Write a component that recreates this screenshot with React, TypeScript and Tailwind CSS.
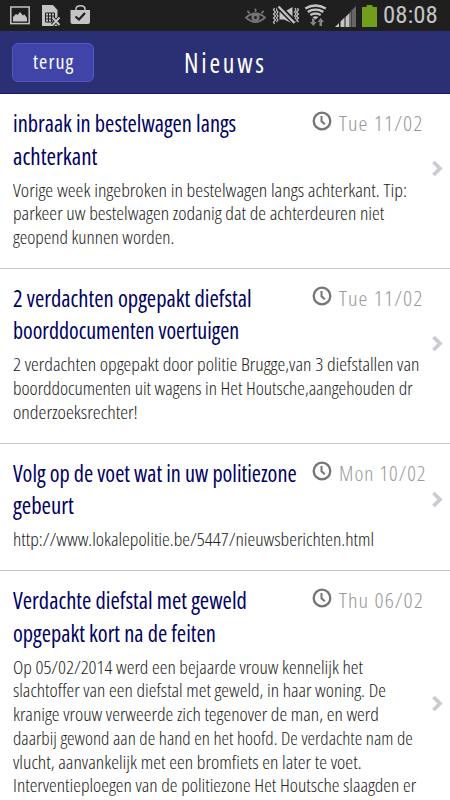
import { useLayoutEffect, useRef, useState } from "react";

type FitTextProps = {
  text: string;
  width: number;
  className?: string;
};

type NewsItem = {
  date: string;
  dateWidth: number;
  title: [string, number][];
  body: [string, number][];
  itemClass: string;
  chevronClass: string;
};

const NEWS: NewsItem[] = [
  {
    date: "Tue 11/02",
    dateWidth: 84,
    title: [
      ["inbraak in bestelwagen langs", 223],
      ["achterkant", 84],
    ],
    body: [
      ["Vorige week ingebroken in bestelwagen langs achterkant. Tip:", 394],
      ["parkeer uw bestelwagen zodanig dat de achterdeuren niet", 371],
      ["geopend kunnen worden.", 161],
    ],
    itemClass: "h-[174.5px]",
    chevronClass: "mt-[66px]",
  },
  {
    date: "Tue 11/02",
    dateWidth: 84,
    title: [
      ["2 verdachten opgepakt diefstal", 239],
      ["boorddocumenten voertuigen", 226],
    ],
    body: [
      ["2 verdachten opgepakt door politie Brugge,van 3 diefstallen van", 406],
      ["boorddocumenten uit wagens in Het Houtsche,aangehouden dr", 400],
      ["onderzoeksrechter!", 125],
    ],
    itemClass: "h-[175px]",
    chevronClass: "mt-[66.5px]",
  },
  {
    date: "Mon 10/02",
    dateWidth: 87,
    title: [
      ["Volg op de voet wat in uw politiezone", 284],
      ["gebeurt", 61],
    ],
    body: [["http://www.lokalepolitie.be/5447/nieuwsberichten.html", 361]],
    itemClass: "h-[127.5px]",
    chevronClass: "mt-[47.5px]",
  },
  {
    date: "Thu 06/02",
    dateWidth: 85,
    title: [
      ["Verdachte diefstal met geweld", 234],
      ["opgepakt kort na de feiten", 203],
    ],
    body: [
      ["Op 05/02/2014 werd een bejaarde vrouw kennelijk het", 350],
      ["slachtoffer van een diefstal met geweld, in haar woning. De", 373],
      ["kranige vrouw verweerde zich tegenover de man, en werd", 366],
      ["daarbij gewond aan de hand en het hoofd. De verdachte nam de", 400],
      ["vlucht, aanvankelijk met een bromfiets en later te voet.", 349],
      ["Interventieploegen van de politiezone Het Houtsche slaagden er", 403],
    ],
    itemClass: "h-[260px]",
    chevronClass: "mt-[124px]",
  },
];

// Condenses a single line of text so that it takes up exactly the given width.
function FitText({ text, width, className = "" }: FitTextProps) {
  const ref = useRef<HTMLSpanElement>(null);
  const [scale, setScale] = useState(1);

  useLayoutEffect(() => {
    if (ref.current) {
      setScale(width / ref.current.offsetWidth);
    }
  }, [text, width]);

  return (
    <span className="block" style={{ width }}>
      <span
        ref={ref}
        className={`inline-block origin-left align-top whitespace-nowrap ${className}`}
        style={{ transform: `scaleX(${scale})` }}
      >
        {text}
      </span>
    </span>
  );
}

function StatusBar() {
  return (
    <div className="flex h-[31px] items-center justify-between bg-[#1f1f1f] pr-3 pl-[10px] text-[#c4c4c4]">
      <svg width="82" height="31" viewBox="0 0 82 31">
        <rect x="0.8" y="7" width="18.4" height="16.6" fill="none" stroke="#c4c4c4" strokeWidth="1.5" />
        <path d="M3 21.5v-4.500l3-3 1.500 1 2.500-3 3 3.500 1.500-1 2.500 3.500v3.500z" fill="#c4c4c4" />
        <path d="M32 5h11l4.500 5v16H32z" fill="#c4c4c4" />
        <path d="M35.500 13h9v9h-9zM38.500 13v9M41.500 13v9M35.500 16h9M35.500 19h9" fill="none" stroke="#1f1f1f" strokeWidth="1" />
        <path d="M42.500 17.500l7 7.500M49.500 17.500l-7 7.500" stroke="#1f1f1f" strokeWidth="4" />
        <path d="M42.500 17.500l7 7.500M49.500 17.500l-7 7.500" stroke="#c4c4c4" strokeWidth="2" />
        <path d="M66 10.500V9c0-4.500 9-4.500 9 0v1.500" fill="none" stroke="#c4c4c4" strokeWidth="1.500" />
        <path d="M60.500 10h19.500v12q0 2-2 2H62.500q-2 0-2-2z" fill="#c4c4c4" />
        <path d="M65.500 16.500l3.500 3 6-6.500" fill="none" stroke="#1f1f1f" strokeWidth="2.200" />
      </svg>
      <div className="flex items-center gap-[6px]">
        <svg width="132" height="31" viewBox="245 0 132 31">
          <g fill="none" stroke="#747474" strokeWidth="1.800">
            <path d="M246 17.500q9.500-8 19 0q-9.500 9-19 0z" />
            <circle cx="255.500" cy="17.500" r="2.800" strokeWidth="2.600" />
            <path d="M255.500 12V8.500M249.500 13.500l-2-2.800M261.500 13.500l2-2.800" />
          </g>
          <path
            d="M274.500 8l-1 2 2 2-2 2 2 2-2 2 2 2-2 2 1 2M277 8l-.5 2 1.500 2-1.500 2 1.500 2-1.500 2 1.500 2-1.500 2M295 8l1 2-1.500 2 1.500 2-1.500 2 1.500 2-1.500 2 1.500 2M297.500 8l1 2-2 2 2 2-2 2 2 2-2 2 2 2"
            fill="none"
            stroke="#c4c4c4"
            strokeWidth="1.200"
          />
          <path d="M279.500 12h4.500l8.500-5v16.500l-8.500-4h-4.500z" fill="#c4c4c4" />
          <path d="M278.500 6.500l16 16" stroke="#1f1f1f" strokeWidth="5.500" />
          <path d="M278.500 6.500l16 16.500" stroke="#c4c4c4" strokeWidth="2.300" />
          <g fill="none" stroke="#c4c4c4" strokeWidth="2.400">
            <path d="M305.300 8.500q10-6 20.500 0M307.800 11.900q7.700-4.500 15.500 0M310.300 15q5.200-3 10.400 0" />
          </g>
          <path d="M312.500 17q3-1.500 6 0l-3 2.500z" fill="#c4c4c4" />
          <path d="M312 18.500v3.500h-2l3.300 4 3.200-4h-2v-3.500zM319.500 26v-4h-2l3.300-4 3.200 4H322v4z" fill="#858585" />
          <path d="M335 27l4-4v4zM340.500 27v-5.500l4-4V27zM345.500 27V17l4-4V27zM350.500 27V12l.500-.5V27z" fill="#c4c4c4" />
          <path d="M351.500 27V10.500l4.500-4.500v21z" fill="#666" />
          <path d="M362 7h4.500V5h6v2h4.500v20H362z" fill="#729f1b" />
        </svg>
        <FitText text="08:08" width={55} className="font-['Roboto'] text-[23px] leading-[31px]" />
      </div>
    </div>
  );
}

function Header() {
  return (
    <header className="grid h-[63px] grid-cols-[1fr_auto_1fr] items-center border-b border-[#151a70] bg-[#2b3074] px-3 text-white">
      <button
        type="button"
        className="flex h-[39px] w-[82px] items-center justify-center rounded-[6px] border border-[#5559bf] bg-[#4044a8]"
      >
        <FitText text="terug" width={41} className="text-[19px] leading-6 font-medium tracking-[1px]" />
      </button>
      <h1>
        <FitText text="Nieuws" width={83} className="text-[28px] leading-8 font-medium tracking-[3px]" />
      </h1>
    </header>
  );
}

function ClockIcon() {
  return (
    <svg width="20" height="20" viewBox="0 0 20 20" fill="none" stroke="#757575">
      <circle cx="10" cy="10" r="8.300" strokeWidth="2.300" />
      <path d="M9.500 5v5.300l3.300 3" strokeWidth="2" />
    </svg>
  );
}

function NewsRow({ item }: { item: NewsItem }) {
  return (
    <li className={`flex overflow-hidden border-b border-[#c6c6c6] pl-[12.5px] ${item.itemClass}`}>
      <div className="w-[419px] shrink-0 pt-[13px]">
        <div className="flex justify-between">
          <h2 className="w-[299px] text-[23.5px] leading-[32.5px] text-[#000064]">
            {item.title.map(([text, width]) => (
              <FitText key={text} text={text} width={width} />
            ))}
          </h2>
          <div className="flex w-[120px] gap-[7px] pt-[4px]">
            <ClockIcon />
            <FitText
              text={item.date}
              width={item.dateWidth}
              className="text-[20.5px] leading-[25px] font-light tracking-[1px] text-[#999]"
            />
          </div>
        </div>
        <div className="pt-[6.5px] text-[19px] leading-[23.8px] font-light text-[#222]">
          {item.body.map(([text, width]) => (
            <FitText key={text} text={text} width={width} />
          ))}
        </div>
      </div>
      <svg width="12" height="17" viewBox="0 0 12 17" className={`shrink-0 ${item.chevronClass}`}>
        <path d="M1.500 2l6.500 6.500-6.500 6.500" fill="none" stroke="#cbcbd4" strokeWidth="3.800" />
      </svg>
    </li>
  );
}

export default function App() {
  return (
    <main className="h-[800px] w-[450px] overflow-hidden bg-white font-['Open_Sans','Liberation_Sans',sans-serif] [font-stretch:75%]">
      <StatusBar />
      <Header />
      <ul>
        {NEWS.map((item, index) => (
          <NewsRow key={index} item={item} />
        ))}
      </ul>
    </main>
  );
}
